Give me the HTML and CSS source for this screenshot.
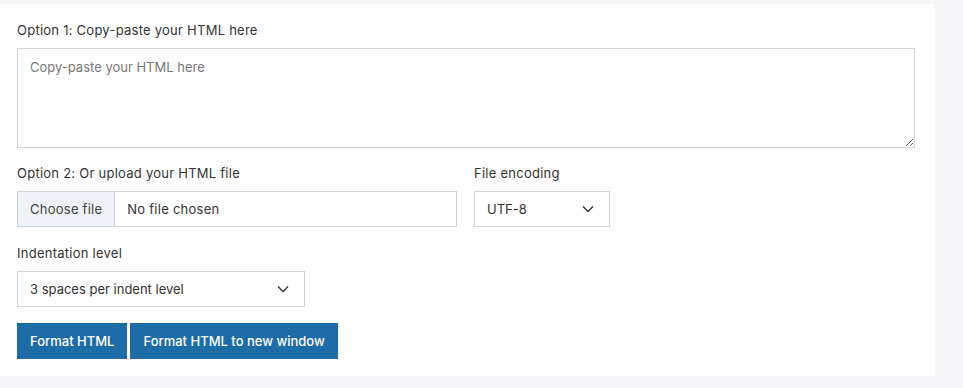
FILE: index.html
```html
<!DOCTYPE html>
<html>
<head>
  <meta charset="UTF-8">
  <title>HTML Formatter</title>
  <link rel="stylesheet" href="styles.css">
</head>
<body>
<div class="panel">
  <form action="#" class="formatter">
    <div class="group">
      <label for="src">Option 1: Copy-paste your HTML here</label>
      <textarea id="src" placeholder="Copy-paste your HTML here"></textarea>
    </div>
    <div class="group row">
      <div class="col-file">
        <label for="upload">Option 2: Or upload your HTML file</label>
        <label class="file">
          <input type="file" id="upload">
          <span class="file-btn">Choose file</span>
          <span class="file-name">No file chosen</span>
        </label>
      </div>
      <div class="col-enc">
        <label for="enc">File encoding</label>
        <div class="pick">
          <select id="enc"><option>UTF-8</option><option>ISO-8859-1</option></select>
          <svg viewBox="0 0 12 8" width="12" height="8"><path d="M1 1.5l5 5 5-5" fill="none" stroke="#333" stroke-width="1.4"/></svg>
        </div>
      </div>
    </div>
    <div class="group">
      <label for="indent">Indentation level</label>
      <div class="pick pick-wide">
        <select id="indent">
          <option>1 space per indent level</option>
          <option>2 spaces per indent level</option>
          <option selected>3 spaces per indent level</option>
          <option>4 spaces per indent level</option>
        </select>
        <svg viewBox="0 0 12 8" width="12" height="8"><path d="M1 1.5l5 5 5-5" fill="none" stroke="#333" stroke-width="1.4"/></svg>
      </div>
    </div>
    <div class="actions">
      <button type="submit" class="btn">Format HTML</button>
      <button type="button" class="btn">Format HTML to new window</button>
    </div>
  </form>
</div>
</body>
</html>
```

FILE: styles.css
```css
*{box-sizing:border-box;}
body{
  margin:0;
  background:#f7f7f9;
  color:#333;
  font-family:Inter,"Open Sans",sans-serif;
  font-size:13px;
  letter-spacing:0.25px;
}
.panel{
  background:#fff;
  width:935px;
  margin-top:4px;
  padding:16px 17px 17px;
  height:372px;
}
label{display:block;line-height:20px;margin-bottom:8px;color:#333;}
.group{margin-bottom:15px;}
.row{margin-bottom:16px;}
textarea{
  display:block;
  width:898px;
  height:100px;
  border:1px solid #cfd5dd;
  padding:10px 12px;
  font:inherit;
  color:#333;
  border-radius:0;
}
textarea::placeholder{color:#777;}
.row{display:flex;gap:17px;}
.col-file{width:440px;}
.file{
  display:flex;
  align-items:center;
  width:440px;
  height:36px;
  margin:0;
  border:1px solid #cfd5dd;
  cursor:pointer;
}
.file input{display:none;}
.file-btn{
  height:34px;
  line-height:34px;
  background:#eef1f6;
  border-right:1px solid #cfd5dd;
  color:#444;
  padding:0 12px;
}
.file-name{padding-left:12px;color:#333;}
.pick{position:relative;width:136px;}
.pick-wide{width:288px;}
select{
  appearance:none;
  width:100%;
  height:36px;
  border:1px solid #cfd5dd;
  border-radius:0;
  background:#fff;
  font:inherit;
  color:#333;
  padding:0 12px;
}
.pick svg{position:absolute;right:16px;top:14px;pointer-events:none;}
.actions{display:flex;gap:3px;margin-top:16px;}
.btn{
  height:36px;
  border:0;
  background:#1d6ca8;
  color:#fff;
  font:inherit;
  font-weight:500;
  padding:0 13px;
}
```
